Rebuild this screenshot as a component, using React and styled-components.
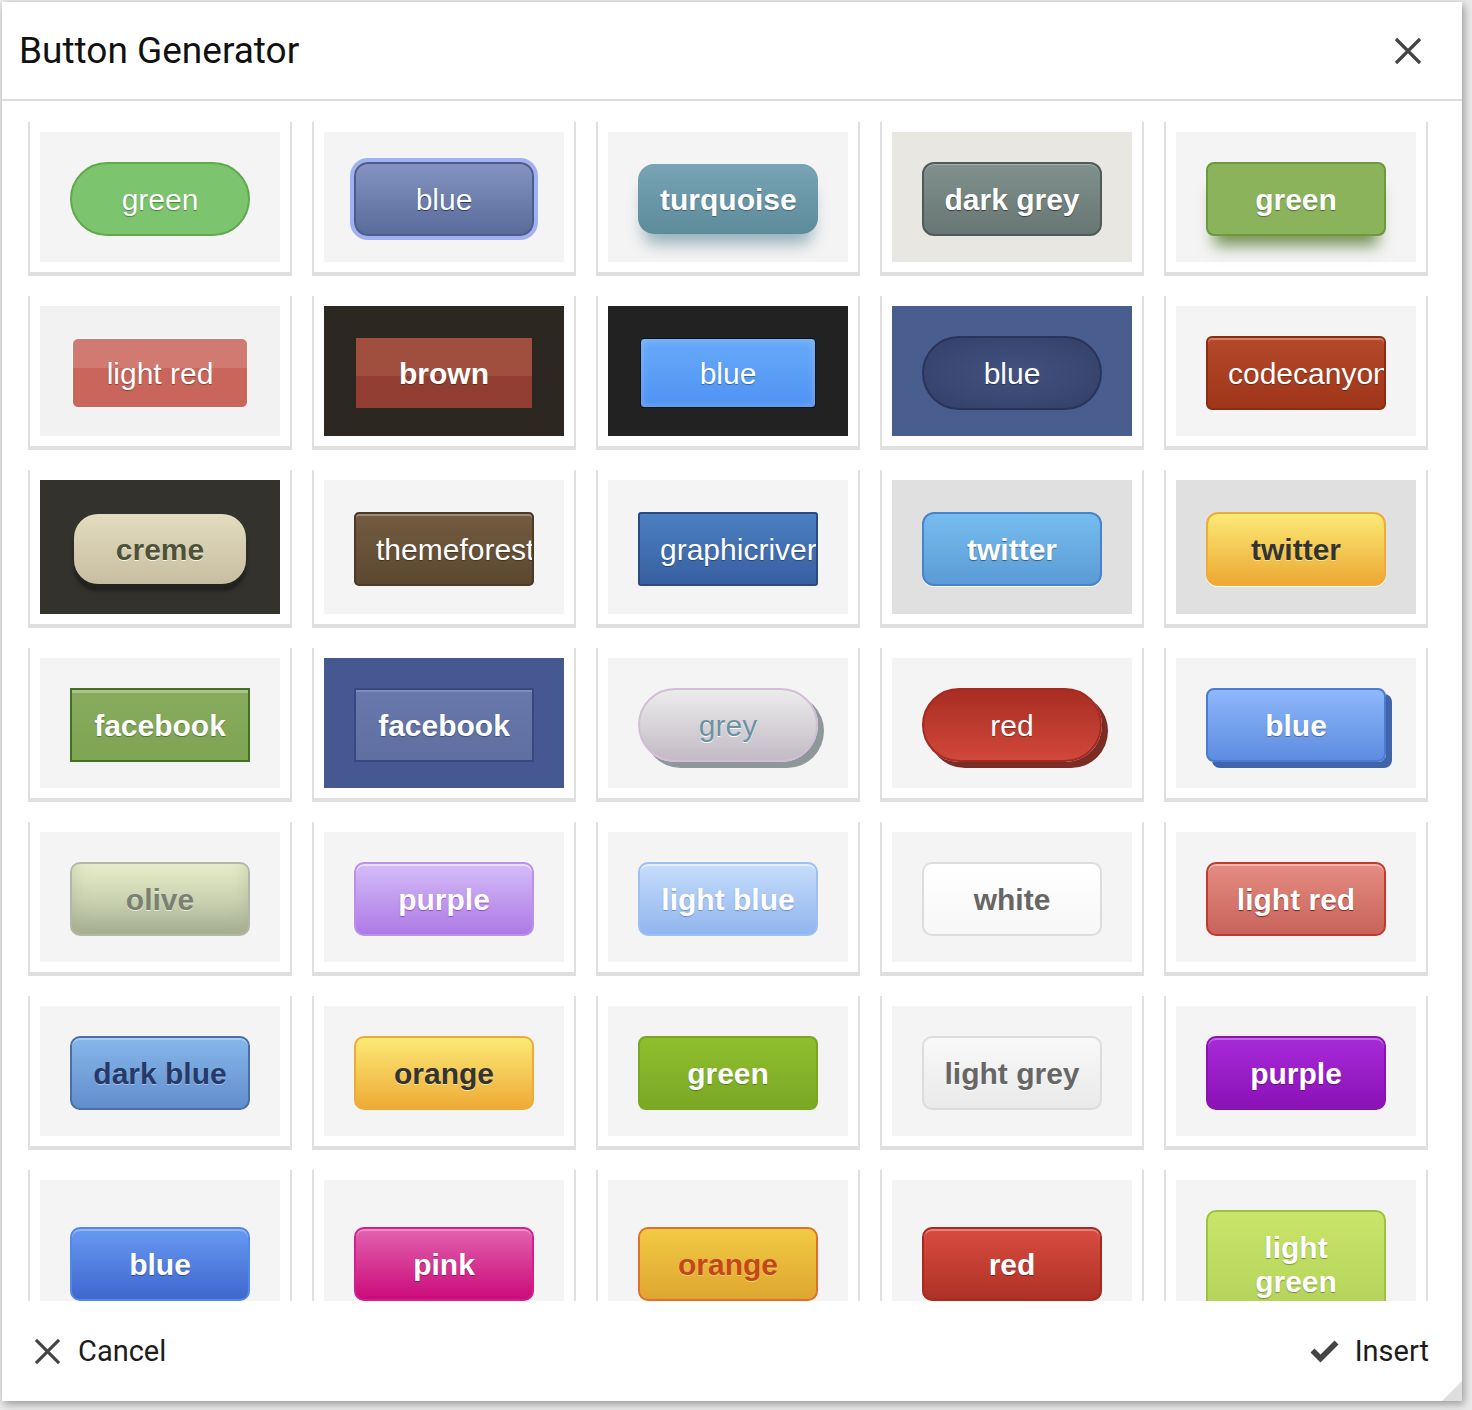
import React from 'react';
import styled, { createGlobalStyle, css } from 'styled-components';

const GlobalStyle = createGlobalStyle`
  html, body {
    margin: 0;
    background: #e9e9e9;
  }

  body {
    font-family: Roboto, "Noto Sans", Arial, sans-serif;
  }
`;

const Page = styled.div`
  padding: 2px 10px 9px 2px;
`;

const Modal = styled.div`
  position: relative;
  width: 1460px;
  height: 1399px;
  display: flex;
  flex-direction: column;
  background: #fff;
  box-shadow: 2px 3px 8px rgba(0, 0, 0, 0.35);
  overflow: hidden;
`;

const Header = styled.header`
  flex: none;
  height: 97px;
  display: flex;
  align-items: center;
  justify-content: space-between;
  padding: 0 40px 0 17px;
  border-bottom: 2px solid #dcdcdc;
`;

const Title = styled.h1`
  margin: 0;
  font-size: 37px;
  font-weight: 400;
  color: #111;
`;

const IconButton = styled.button`
  display: flex;
  padding: 0;
  border: 0;
  background: none;
  cursor: pointer;
`;

const Body = styled.div`
  flex: 1;
  overflow: hidden;
  padding: 21px 34px 0 26px;
`;

const Grid = styled.div`
  display: grid;
  grid-template-columns: repeat(5, 264px);
  gap: 20px;
`;

const Card = styled.div`
  box-sizing: border-box;
  display: flex;
  flex-direction: column;
  padding: 10px;
  background: #fff;
  border: solid #dfdfdf;
  border-width: 0 2px 4px;
`;

const Preview = styled.div`
  flex: 1;
  box-sizing: border-box;
  min-height: 130px;
  display: flex;
  align-items: center;
  justify-content: center;
  padding: 30px 30px 26px;
  background: ${props => props.$bg || '#f4f4f4'};
`;

const variants = {
  greenPill: css`
    background: #7cc46d;
    border-color: #62a94b;
    border-radius: 40px;
  `,
  blueRing: css`
    background: linear-gradient(#8392c1, #5a6c9b);
    border-color: #4d5d8a;
    border-radius: 14px;
    box-shadow: 0 0 0 4px #a0b0f0;
    text-shadow: 0 1px 1px #2a3760;
  `,
  turquoise: css`
    border: 0;
    padding: 19px 22px 17px;
    background: linear-gradient(#78a4b5, #5d8b9a);
    border-radius: 16px;
    box-shadow: 0 16px 16px -6px rgba(60, 110, 130, 0.5);
  `,
  darkGrey: css`
    background: linear-gradient(#80918d, #687674);
    border-color: #4e5b58;
    border-radius: 12px;
    box-shadow: inset 0 1px 0 rgba(255, 255, 255, 0.3);
    text-shadow: 0 1px 1px rgba(0, 0, 0, 0.5);
  `,
  greenShadow: css`
    background: #8ab35b;
    border-color: #6c9a3b;
    border-radius: 8px;
    box-shadow: 0 18px 14px -8px rgba(70, 110, 30, 0.7);
    text-shadow: 0 1px 1px rgba(0, 0, 0, 0.4);
  `,
  lightRedGloss: css`
    width: 176px;
    padding: 18px 20px 16px;
    border: 1px solid #fff;
    border-radius: 6px;
    background: linear-gradient(#d17a72 0 43%, #c9655a 43%);
  `,
  brownGloss: css`
    width: 176px;
    border: 0;
    background: linear-gradient(#a04f3f 0 54%, #933e32 54%);
  `,
  blueOnBlack: css`
    width: 176px;
    padding: 18px 20px 16px;
    border: 1px solid #111;
    border-radius: 4px;
    background: linear-gradient(#67aaf8, #4f92f4);
    box-shadow: inset 0 0 8px rgba(255, 255, 255, 0.25);
  `,
  bluePill: css`
    background: radial-gradient(ellipse at center, #43527f 0%, #323f68 100%);
    border-color: #29345a;
    border-radius: 40px;
  `,
  codecanyon: css`
    background: linear-gradient(#b5492a, #9f3519);
    border-color: #8b2d15;
    border-radius: 6px;
    box-shadow: inset 0 2px 0 rgba(255, 200, 180, 0.45);
  `,
  creme: css`
    width: 172px;
    margin: 4px 0;
    border: 0;
    border-radius: 24px;
    background: linear-gradient(#e4dcbf, #c7bea1);
    box-shadow: 0 5px 0 #23221e, 0 7px 4px rgba(0, 0, 0, 0.4);
    color: #4d5236;
    text-shadow: 0 1px 0 rgba(255, 255, 255, 0.85);
  `,
  themeforest: css`
    background: linear-gradient(#735c40, #5c4830);
    border-color: #4a3a27;
    border-radius: 5px;
    box-shadow: inset 0 2px 0 #a08a78;
  `,
  graphicriver: css`
    background: linear-gradient(#4b80c1, #375fa2);
    border-color: #2b4a80;
    border-radius: 3px;
  `,
  twitterBlue: css`
    background: linear-gradient(#76bdef, #5b9bd6);
    border-color: #4a82cc;
    border-radius: 12px;
    box-shadow: 0 1px 0 #fff;
    text-shadow: 0 1px 1px rgba(0, 0, 0, 0.45);
  `,
  twitterYellow: css`
    background: linear-gradient(#fce975, #eca934);
    border-color: #eeac36;
    border-radius: 12px;
    box-shadow: 0 1px 0 #fff;
    color: #333;
    text-shadow: 0 1px 0 rgba(255, 255, 150, 0.7);
  `,
  facebookGreen: css`
    background: linear-gradient(#87ab5e, #7ea552);
    border-color: #4a6d24;
    box-shadow: inset 0 3px 0 #a8c686;
  `,
  facebookBlue: css`
    background: linear-gradient(#6878aa, #5f6fa2);
    border-color: #384881;
    box-shadow: inset 0 2px 0 rgba(255, 255, 255, 0.15);
  `,
  greyPill: css`
    background: linear-gradient(#ececec, #c2bac4);
    border-color: #d4bcd8;
    border-radius: 40px;
    box-shadow: 6px 6px 0 #8e989a;
    color: #6b93a5;
    text-shadow: 0 1px 0 #fff;
  `,
  redPill: css`
    background: linear-gradient(#a82d22, #d1473b);
    border-color: #a4291f;
    border-radius: 40px;
    box-shadow: 6px 6px 0 #7b2c25;
  `,
  blueBlock: css`
    background: linear-gradient(#8eb8fb, #5d8ce0);
    border-color: #4a7bd0;
    border-radius: 8px;
    box-shadow: 6px 6px 0 #3f64aa;
  `,
  olive: css`
    background: linear-gradient(#e7edc9, #b0b89b);
    border-color: #b3b7a9;
    border-radius: 10px;
    box-shadow: inset 0 -14px 18px rgba(150, 160, 130, 0.4);
    color: #7a8170;
    text-shadow: 0 1px 0 rgba(255, 255, 255, 0.6);
  `,
  purpleLight: css`
    background: linear-gradient(#d5bcf7, #ad7ae5);
    border-color: #bb8fea;
    border-radius: 10px;
    box-shadow: inset 0 2px 0 rgba(255, 255, 255, 0.5);
    text-shadow: 0 1px 1px #8c4fc8;
  `,
  lightBlue: css`
    background: linear-gradient(#c7ddfb, #90b5ee);
    border-color: #9cc0f2;
    border-radius: 10px;
    box-shadow: inset 0 2px 0 rgba(255, 255, 255, 0.5);
    text-shadow: 0 1px 1px rgba(60, 100, 160, 0.5);
  `,
  white: css`
    background: linear-gradient(#fff, #f7f7f7);
    border-color: #ddd;
    border-radius: 10px;
    color: #666;
    text-shadow: 0 1px 0 #fff;
  `,
  lightRed: css`
    background: linear-gradient(#e58c82, #c8635a);
    border-color: #c23a2e;
    border-radius: 10px;
    box-shadow: inset 0 2px 0 rgba(255, 255, 255, 0.35);
    text-shadow: 0 1px 1px #7a2a22;
  `,
  darkBlue: css`
    background: linear-gradient(#86b6ea, #628ecb);
    border-color: #4a6ea8;
    border-radius: 10px;
    box-shadow: inset 0 2px 0 rgba(255, 255, 255, 0.3);
    color: #25396a;
    text-shadow: 0 1px 0 rgba(255, 255, 255, 0.4);
  `,
  orange: css`
    background: linear-gradient(#fce976, #eeab36);
    border-color: #eeac36;
    border-radius: 10px;
    color: #333;
    text-shadow: 0 1px 0 rgba(255, 255, 200, 0.6);
  `,
  greenBold: css`
    background: linear-gradient(#8fbf2e, #7aa824);
    border-color: #79a722;
    border-radius: 8px;
    text-shadow: 0 1px 1px rgba(0, 0, 0, 0.3);
  `,
  lightGrey: css`
    background: linear-gradient(#f9f9f9, #e9e9e9);
    border-color: #dcdcdc;
    border-radius: 10px;
    color: #666;
    text-shadow: 0 1px 0 #fff;
  `,
  purple: css`
    background: linear-gradient(#a82ad9, #8a12b6);
    border-color: #8a13b2;
    border-radius: 10px;
    box-shadow: inset 0 2px 0 rgba(255, 255, 255, 0.3);
  `,
  blueBright: css`
    background: linear-gradient(#6799f1, #3f67cf);
    border-color: #5289e9;
    border-radius: 10px;
    box-shadow: inset 0 2px 0 rgba(255, 255, 255, 0.3);
  `,
  pink: css`
    background: linear-gradient(#e262ae, #cb0b7a);
    border-color: #d41f8b;
    border-radius: 10px;
    box-shadow: inset 0 2px 0 rgba(255, 255, 255, 0.3);
  `,
  orangeRed: css`
    background: linear-gradient(#f1c944, #dea730);
    border-color: #e0702e;
    border-radius: 10px;
    color: #c5461a;
    text-shadow: 0 1px 0 rgba(255, 240, 150, 0.6);
  `,
  redBold: css`
    background: linear-gradient(#d94c40, #ae3125);
    border-color: #a52b21;
    border-radius: 10px;
    box-shadow: inset 0 2px 0 rgba(255, 255, 255, 0.3);
  `,
  lightGreen: css`
    background: linear-gradient(#c9e56a, #b3d159);
    border-color: #9dc23f;
    border-radius: 10px;
    text-shadow: 0 1px 1px rgba(60, 80, 20, 0.5);
  `,
};

const SampleButton = styled.a`
  display: block;
  box-sizing: border-box;
  width: 180px;
  padding: 19px 20px 17px;
  border: 2px solid transparent;
  font-family: "Liberation Sans", Arial, sans-serif;
  font-size: 30px;
  line-height: 34px;
  font-weight: ${props => props.$bold ? 700 : 400};
  color: #fff;
  text-align: center;
  text-shadow: 0 1px 1px rgba(0, 0, 0, 0.35);
  overflow: hidden;
  cursor: pointer;
  ${props => variants[props.$variant]}
`;

const Footer = styled.footer`
  flex: none;
  height: 100px;
  display: flex;
  align-items: center;
  justify-content: space-between;
  padding: 0 33px 0 32px;
`;

const FooterAction = styled.button`
  display: flex;
  align-items: center;
  gap: ${props => props.$gap || 17}px;
  padding: 0;
  border: 0;
  background: none;
  font-family: Roboto, "Noto Sans", Arial, sans-serif;
  font-size: 29px;
  color: #1c1c1c;
  cursor: pointer;
`;

const ResizeGrip = styled.div`
  position: absolute;
  right: 0;
  bottom: 0;
  width: 0;
  height: 0;
  border-style: solid;
  border-width: 0 0 20px 20px;
  border-color: transparent transparent #dedede transparent;
`;

const samples = [
  { label: 'green', variant: 'greenPill' },
  { label: 'blue', variant: 'blueRing' },
  { label: 'turquoise', variant: 'turquoise', bold: true },
  { label: 'dark grey', variant: 'darkGrey', bold: true, bg: '#e8e7e2' },
  { label: 'green', variant: 'greenShadow', bold: true },

  { label: 'light red', variant: 'lightRedGloss', bg: '#f2f2f2' },
  { label: 'brown', variant: 'brownGloss', bold: true, bg: '#2c2720' },
  { label: 'blue', variant: 'blueOnBlack', bg: '#222' },
  { label: 'blue', variant: 'bluePill', bg: '#4a5d8f' },
  { label: 'codecanyon', variant: 'codecanyon' },

  { label: 'creme', variant: 'creme', bold: true, bg: '#33322d' },
  { label: 'themeforest', variant: 'themeforest' },
  { label: 'graphicriver', variant: 'graphicriver' },
  { label: 'twitter', variant: 'twitterBlue', bold: true, bg: '#e0e0e0' },
  { label: 'twitter', variant: 'twitterYellow', bold: true, bg: '#e0e0e0' },

  { label: 'facebook', variant: 'facebookGreen', bold: true },
  { label: 'facebook', variant: 'facebookBlue', bold: true, bg: '#455891' },
  { label: 'grey', variant: 'greyPill' },
  { label: 'red', variant: 'redPill' },
  { label: 'blue', variant: 'blueBlock', bold: true },

  { label: 'olive', variant: 'olive', bold: true },
  { label: 'purple', variant: 'purpleLight', bold: true },
  { label: 'light blue', variant: 'lightBlue', bold: true },
  { label: 'white', variant: 'white', bold: true },
  { label: 'light red', variant: 'lightRed', bold: true },

  { label: 'dark blue', variant: 'darkBlue', bold: true },
  { label: 'orange', variant: 'orange', bold: true },
  { label: 'green', variant: 'greenBold', bold: true },
  { label: 'light grey', variant: 'lightGrey', bold: true },
  { label: 'purple', variant: 'purple', bold: true },

  { label: 'blue', variant: 'blueBright', bold: true },
  { label: 'pink', variant: 'pink', bold: true },
  { label: 'orange', variant: 'orangeRed', bold: true },
  { label: 'red', variant: 'redBold', bold: true },
  { label: 'light green', variant: 'lightGreen', bold: true },
];

function CrossIcon ({ size = 28 }) {
  return (
    <svg width={size} height={size} viewBox="0 0 28 28" fill="none" stroke="#444" strokeWidth="3.2">
      <path d="M2 2L26 26M26 2L2 26" />
    </svg>
  )
}

function CheckIcon () {
  return (
    <svg width="29" height="23" viewBox="0 0 29 23" fill="#444">
      <path d="M0.5 12.5L4.5 8.5L10.5 14.5L24.5 0.5L28.5 4.5L10.5 22.5z" />
    </svg>
  )
}

function App () {
  return (
    <Page>
      <GlobalStyle />
      <Modal>
        <Header>
          <Title>Button Generator</Title>
          <IconButton title="Close"><CrossIcon /></IconButton>
        </Header>
        <Body>
          <Grid>
            {samples.map((s, i) => (
              <Card key={i}>
                <Preview $bg={s.bg}>
                  <SampleButton $variant={s.variant} $bold={s.bold}>{s.label}</SampleButton>
                </Preview>
              </Card>
            ))}
          </Grid>
        </Body>
        <Footer>
          <FooterAction><CrossIcon size={27} />Cancel</FooterAction>
          <FooterAction $gap={16}><CheckIcon />Insert</FooterAction>
        </Footer>
        <ResizeGrip />
      </Modal>
    </Page>
  );
}

export default App;
